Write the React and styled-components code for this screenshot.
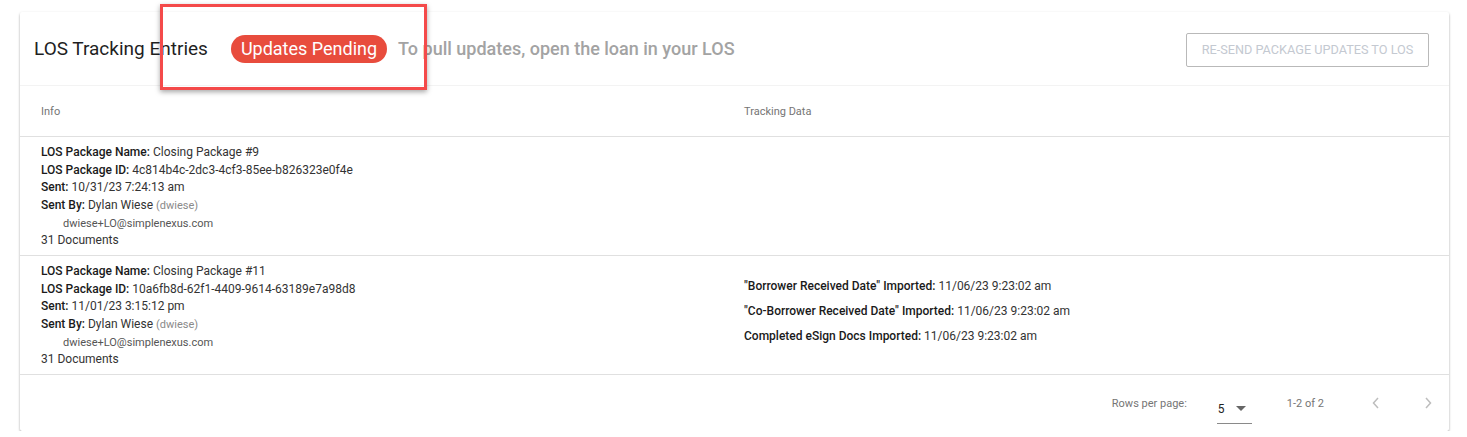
import React from "react";
import styled, { createGlobalStyle } from "styled-components";

const Global = createGlobalStyle`
  html, body { margin: 0; padding: 0; background: #fff; }
  body { font-family: Roboto, "Liberation Sans", Arial, sans-serif; color: rgba(0,0,0,0.87); }
  * { box-sizing: border-box; }
`;

const Page = styled.div`
  position: relative;
  padding: 12px 18px 0 20px;
`;

const Card = styled.div`
  background: #fff;
  border-radius: 2px;
  box-shadow: 0 1px 3px rgba(0,0,0,0.18), 0 2px 2px rgba(0,0,0,0.22);
`;

const Header = styled.div`
  height: 74px;
  display: flex;
  align-items: center;
  padding: 0 20px 0 14px;
  border-bottom: 1px solid #f3f3f3;
`;

const Title = styled.h2`
  margin: 0;
  font-size: 19px;
  font-weight: 400;
  color: #1f1f1f;
`;

const Chip = styled.span`
  margin-left: 23px;
  height: 28px;
  line-height: 28px;
  padding: 0 10px;
  border-radius: 14px;
  background: #e84c3d;
  color: #fff;
  font-size: 18px;
  margin-top: 1px;
`;

const Hint = styled.span`
  margin-left: 11px;
  font-size: 18px;
  font-weight: 500;
  color: #a3a3a3;
`;

const Spacer = styled.div`
  flex: 1;
`;

const OutlineButton = styled.button`
  height: 34px;
  width: 243px;
  margin-top: 2px;
  border: 1px solid #b9b9b9;
  border-radius: 2px;
  background: #fff;
  color: #c4c9d1;
  font-family: inherit;
  font-size: 12.7px;
  text-transform: uppercase;
  padding: 0;
`;

const Grid = styled.div`
  display: grid;
  grid-template-columns: 703px 1fr;
  border-bottom: 1px solid #e0e0e0;
  min-height: ${(p) => p.$h}px;
`;

const HeadCell = styled.div`
  display: flex;
  align-items: center;
  padding-left: 21px;
  font-size: 11px;
  color: #757575;
`;

const Cell = styled.div`
  display: flex;
  flex-direction: column;
  justify-content: center;
  padding: ${(p) => (p.$lift ? "5px 21px 13px" : "7px 21px 5px")};
  font-size: 12px;
  color: #333;
`;

const Line = styled.div`
  line-height: 17.6px;
  white-space: nowrap;
`;

const Label = styled.b`
  font-weight: 500;
  color: #1a1a1a;
`;

const Handle = styled.span`
  font-size: 11px;
  color: #8a8a8a;
`;

const Email = styled.div`
  line-height: 17.6px;
  font-size: 11px;
  color: #555;
  padding-left: 22px;
`;

const TrackLine = styled.div`
  line-height: 25px;
  white-space: nowrap;
`;

const Footer = styled.div`
  height: 56px;
  display: flex;
  align-items: center;
  justify-content: flex-end;
  padding-right: 16px;
  font-size: 11px;
  color: #757575;
`;

const Select = styled.div`
  margin-left: 30px;
  width: 35px;
  height: 34px;
  padding-top: 12px;
  border-bottom: 1px solid #8a8a8a;
  display: flex;
  align-items: flex-start;
  justify-content: space-between;
  font-size: 12px;
  color: #222;
  margin-top: 7px;
  padding-left: 1px;
  padding-right: 6px;
`;

const Range = styled.span`
  margin-left: 35px;
`;

const NavButton = styled.span`
  margin-left: ${(p) => p.$ml}px;
  display: flex;
  align-items: center;
`;

const Annotation = styled.div`
  position: absolute;
  left: 160px;
  top: 4px;
  width: 267px;
  height: 86px;
  border: 3px solid #f44a4a;
  box-shadow: 0 2px 5px rgba(0,0,0,0.35);
  pointer-events: none;
`;

const Chevron = ({ dir }) => (
  <svg width="10" height="14" viewBox="0 0 10 14">
    <path
      d={dir === "left" ? "M7 2 L2.5 7 L7 12" : "M3 2 L7.5 7 L3 12"}
      fill="none"
      stroke="#bdbdbd"
      strokeWidth="1.5"
    />
  </svg>
);

const entries = [
  {
    name: "Closing Package #9",
    id: "4c814b4c-2dc3-4cf3-85ee-b826323e0f4e",
    sent: "10/31/23 7:24:13 am",
    tracking: [],
  },
  {
    name: "Closing Package #11",
    id: "10a6fb8d-62f1-4409-9614-63189e7a98d8",
    sent: "11/01/23 3:15:12 pm",
    tracking: [
      ['"Borrower Received Date" Imported:', "11/06/23 9:23:02 am"],
      ['"Co-Borrower Received Date" Imported:', "11/06/23 9:23:02 am"],
      ["Completed eSign Docs Imported:", "11/06/23 9:23:02 am"],
    ],
  },
];

export default function App() {
  return (
    <Page>
      <Global />
      <Card>
        <Header>
          <Title>LOS Tracking Entries</Title>
          <Chip>Updates Pending</Chip>
          <Hint>To pull updates, open the loan in your LOS</Hint>
          <Spacer />
          <OutlineButton>Re-send package updates to LOS</OutlineButton>
        </Header>
        <Grid $h={51}>
          <HeadCell>Info</HeadCell>
          <HeadCell>Tracking Data</HeadCell>
        </Grid>
        {entries.map((e) => (
          <Grid key={e.id} $h={119}>
            <Cell>
              <Line>
                <Label>LOS Package Name:</Label> {e.name}
              </Line>
              <Line>
                <Label>LOS Package ID:</Label> {e.id}
              </Line>
              <Line>
                <Label>Sent:</Label> {e.sent}
              </Line>
              <Line>
                <Label>Sent By:</Label> Dylan Wiese <Handle>(dwiese)</Handle>
              </Line>
              <Email>dwiese+LO@simplenexus.com</Email>
              <Line>31 Documents</Line>
            </Cell>
            <Cell $lift>
              {e.tracking.map(([l, v]) => (
                <TrackLine key={l}>
                  <Label>{l}</Label> {v}
                </TrackLine>
              ))}
            </Cell>
          </Grid>
        ))}
        <Footer>
          <span>Rows per page:</span>
          <Select>
            <span>5</span>
            <svg width="10" height="6" viewBox="0 0 10 6" style={{ marginTop: 4 }}>
              <path d="M0 0 L10 0 L5 5 Z" fill="#666" />
            </svg>
          </Select>
          <Range>1-2 of 2</Range>
          <NavButton $ml={47}>
            <Chevron dir="left" />
          </NavButton>
          <NavButton $ml={42}>
            <Chevron dir="right" />
          </NavButton>
        </Footer>
      </Card>
      <Annotation />
    </Page>
  );
}
